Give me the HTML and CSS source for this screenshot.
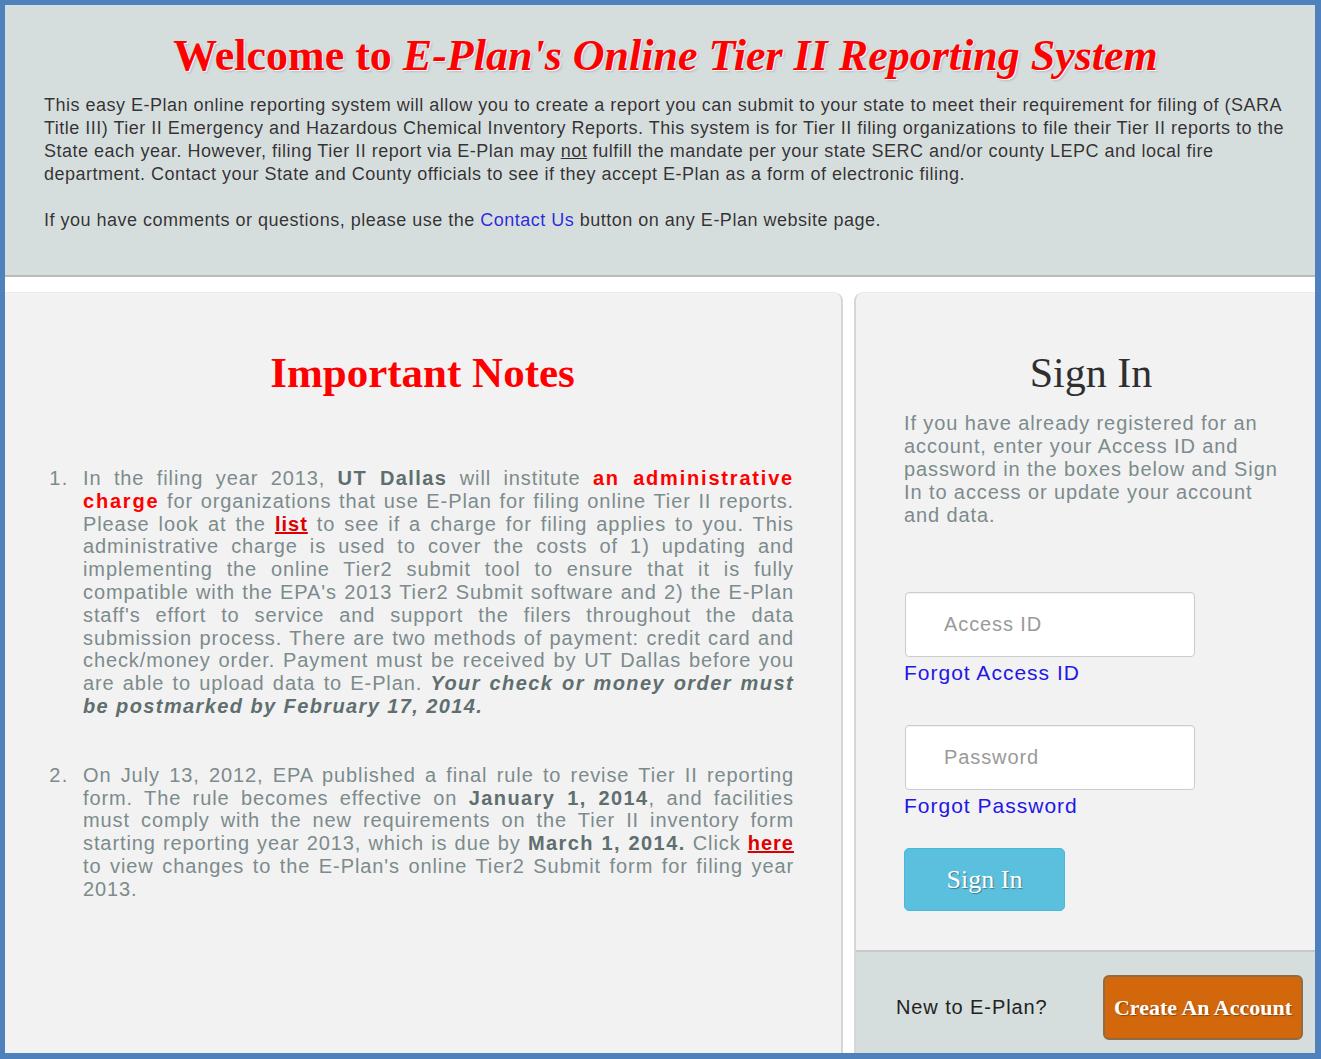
FILE: index.html
```html
<!DOCTYPE html>
<html lang="en">
<head>
<meta charset="utf-8">
<title>E-Plan Online Tier II Reporting System</title>
<link rel="stylesheet" href="styles.css">
</head>
<body>
<div class="frame">
  <header class="intro">
    <h1 class="intro-title">Welcome to <em>E-Plan's Online Tier II Reporting System</em></h1>
    <p class="intro-text">This easy E-Plan online reporting system will allow you to create a report you can submit to your state to meet their requirement for filing of (SARA Title III) Tier II Emergency and Hazardous Chemical Inventory Reports. This system is for Tier II filing organizations to file their Tier II reports to the State each year. However, filing Tier II report via E-Plan may <u>not</u> fulfill the mandate per your state SERC and/or county LEPC and local fire department. Contact your State and County officials to see if they accept E-Plan as a form of electronic filing.</p>
    <p class="intro-text intro-contact">If you have comments or questions, please use the <a class="contact-link" href="#">Contact Us</a> button on any E-Plan website page.</p>
  </header>

  <main class="content">
    <section class="panel notes">
      <h2 class="notes-title">Important Notes</h2>
      <ol class="notes-list">
        <li>In the filing year 2013, <b class="dark">UT Dallas</b> will institute <b class="red">an administrative charge</b> for organizations that use E-Plan for filing online Tier II reports. Please look at the <a class="red-link" href="#">list</a> to see if a charge for filing applies to you. This administrative charge is used to cover the costs of 1) updating and implementing the online Tier2 submit tool to ensure that it is fully compatible with the EPA's 2013 Tier2 Submit software and 2) the E-Plan staff's effort to service and support the filers throughout the data submission process. There are two methods of payment: credit card and check/money order. Payment must be received by UT Dallas before you are able to upload data to E-Plan. <b class="dark"><i>Your check or money order must be postmarked by February 17, 2014.</i></b></li>
        <li>On July 13, 2012, EPA published a final rule to revise Tier II reporting form. The rule becomes effective on <b class="dark">January 1, 2014</b>, and facilities must comply with the new requirements on the Tier II inventory form starting reporting year 2013, which is due by <b class="dark">March 1, 2014.</b> Click <a class="red-link" href="#">here</a> to view changes to the E-Plan's online Tier2 Submit form for filing year 2013.</li>
      </ol>
    </section>

    <aside class="panel signin">
      <div class="signin-body">
        <h2 class="signin-title">Sign In</h2>
        <p class="signin-text">If you have already registered for an account, enter your Access ID and password in the boxes below and Sign In to access or update your account and data.</p>
        <form class="signin-form">
          <input class="field" type="text" placeholder="Access ID">
          <a class="forgot" href="#">Forgot Access ID</a>
          <input class="field field-pass" type="password" placeholder="Password">
          <a class="forgot" href="#">Forgot Password</a>
          <button class="btn-signin" type="button">Sign In</button>
        </form>
      </div>
      <div class="signup">
        <span class="signup-text">New to E-Plan?</span>
        <button class="btn-create" type="button">Create An Account</button>
      </div>
    </aside>
  </main>
</div>
</body>
</html>
```

FILE: styles.css
```css
* { box-sizing: border-box; }

html, body {
  margin: 0;
  padding: 0;
  background: #ffffff;
}

body {
  font-family: "Liberation Sans", Arial, sans-serif;
}

.frame {
  width: 1321px;
  height: 1059px;
  border-style: solid;
  border-color: #4f81bd;
  border-width: 5px 6px 6px 5px;
  display: flex;
  flex-direction: column;
  background: #ffffff;
}

/* ---------- header ---------- */
.intro {
  height: 272px;
  background: #d5dddd;
  border-bottom: 2px solid #b9bcbc;
  padding: 26px 28px 0 39px;
}

.intro-title {
  margin: 0;
  text-align: center;
  font-family: "Liberation Serif", "Times New Roman", serif;
  font-weight: bold;
  font-size: 44px;
  line-height: 50px;
  color: #ff0000;
  text-shadow: 1px 1px 1px #ffffff, 2px 2px 2px rgba(120,120,120,0.35);
}

.intro-title em {
  font-style: italic;
}

.intro-text {
  margin: 13px 0 0 0;
  font-size: 18px;
  line-height: 23px;
  color: #333333;
  letter-spacing: 0.5px;
  text-shadow: 0 0 1px rgba(255,255,255,0.6);
}

.intro-contact {
  margin-top: 23px;
}

.contact-link {
  color: #2b2bd9;
  text-decoration: none;
}

/* ---------- panels ---------- */
.content {
  flex: 1;
  display: flex;
  gap: 11px;
  margin-top: 15px;
}

.panel {
  background: #f2f2f2;
  border-top: 1px solid #ececec;
}

.notes {
  width: 838px;
  border-right: 2px solid #d6d6d6;
  border-top-right-radius: 9px;
  padding: 55px 47px 0 46px;
}

.notes-title {
  margin: 0;
  text-align: center;
  font-family: "Liberation Serif", "Times New Roman", serif;
  font-weight: bold;
  font-size: 43px;
  line-height: 50px;
  color: #ff0000;
}

.notes-list {
  margin: 69px 0 0 0;
  padding-left: 32px;
  font-size: 20px;
  line-height: 22.8px;
  letter-spacing: 0.9px;
  color: #7c8b8c;
  text-align: justify;
}

.notes-list li + li {
  margin-top: 46px;
}

.notes-list li::marker {
  content: counter(list-item) ".\00a0\00a0";
  color: #7c8b8c;
  letter-spacing: 1.5px;
}

.notes-list .dark {
  letter-spacing: 1.4px;
}

.notes-list .red {
  letter-spacing: 1.8px;
}

.notes-list .red-link {
  letter-spacing: 1px;
}

.dark {
  color: #5f6e6f;
}

.red {
  color: #ff0000;
}

.red-link {
  color: #dd0000;
  font-weight: bold;
  text-decoration: underline;
}

/* ---------- sign in ---------- */
.signin {
  flex: 1;
  display: flex;
  flex-direction: column;
  border-left: 2px solid #d6d6d6;
  border-top-left-radius: 9px;
}

.signin-body {
  padding: 55px 30px 0 48px;
}

.signin-title {
  margin: 0 7px 0 0;
  text-align: center;
  font-family: "Liberation Serif", "Times New Roman", serif;
  font-weight: normal;
  font-size: 42px;
  line-height: 50px;
  color: #2f2f2f;
}

.signin-text {
  margin: 14px 0 0 0;
  font-size: 20px;
  line-height: 23px;
  letter-spacing: 0.9px;
  color: #7c8b8c;
}

.signin-form {
  margin-top: 65px;
  display: flex;
  flex-direction: column;
  align-items: flex-start;
}

.field {
  width: 290px;
  height: 65px;
  margin-left: 1px;
  padding: 0 0 0 38px;
  border: 1px solid #cccccc;
  border-radius: 4px;
  background: #ffffff;
  box-shadow: inset 0 1px 1px rgba(0,0,0,0.06);
  font-family: "Liberation Sans", Arial, sans-serif;
  font-size: 20px;
  letter-spacing: 0.9px;
  color: #555555;
}

.field::placeholder {
  color: #9a9a9a;
}

.field-pass {
  margin-top: 41px;
}

.forgot {
  margin-top: 4px;
  font-size: 21px;
  line-height: 23px;
  letter-spacing: 1px;
  color: #2416e6;
  text-decoration: none;
}

.btn-signin {
  margin-top: 31px;
  width: 161px;
  height: 63px;
  background: #5bc0de;
  border: 1px solid #46b8da;
  border-radius: 5px;
  font-family: "Liberation Serif", "Times New Roman", serif;
  font-size: 26px;
  color: #ffffff;
  text-shadow: 1px 1px 1px rgba(0,0,0,0.35);
  cursor: pointer;
}

.signup {
  margin-top: auto;
  height: 103px;
  background: #d5dddd;
  border-top: 2px solid #c6c9c9;
  display: flex;
  align-items: center;
  justify-content: space-between;
  padding: 10px 12px 0 40px;
}

.signup-text {
  font-size: 20px;
  letter-spacing: 0.9px;
  color: #222222;
}

.btn-create {
  width: 200px;
  height: 65px;
  background: #d2680b;
  border: 2px solid #8f6c45;
  border-radius: 6px;
  font-family: "Liberation Serif", "Times New Roman", serif;
  font-weight: bold;
  font-size: 22px;
  color: #ffffff;
  text-shadow: 1px 1px 1px rgba(0,0,0,0.35);
  cursor: pointer;
}
```
